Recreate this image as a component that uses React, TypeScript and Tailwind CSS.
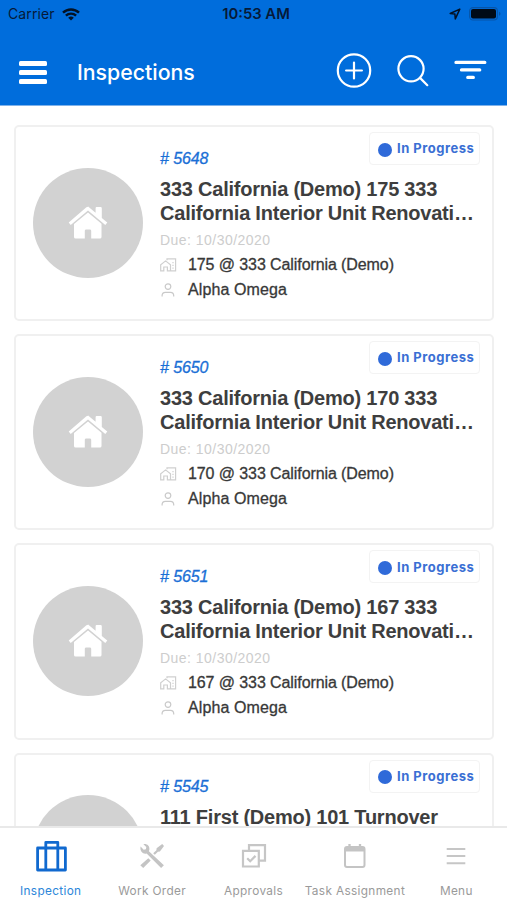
import React from "react";

const helv = "font-['Liberation_Sans',Arial,sans-serif]";
const inter = "font-['Inter',sans-serif]";

type Inspection = { id: string; title: string[]; due: string; unit: string; person: string };

const inspections: Inspection[] = [
  { id: "5648", title: ["333 California (Demo) 175 333", "California Interior Unit Renovati…"], due: "10/30/2020", unit: "175 @ 333 California (Demo)", person: "Alpha Omega" },
  { id: "5650", title: ["333 California (Demo) 170 333", "California Interior Unit Renovati…"], due: "10/30/2020", unit: "170 @ 333 California (Demo)", person: "Alpha Omega" },
  { id: "5651", title: ["333 California (Demo) 167 333", "California Interior Unit Renovati…"], due: "10/30/2020", unit: "167 @ 333 California (Demo)", person: "Alpha Omega" },
  { id: "5545", title: ["111 First (Demo) 101 Turnover"], due: "", unit: "", person: "" },
];

function HouseIcon() {
  return (
    <svg width="40" height="34" viewBox="0 0 40 34" fill="#fff">
      <path d="M20 .6 27.6 6.8V2.2q0-1.2 1-1.2h4q1.2 0 1.2 1.2v9.7l5.5 4.6-2 2.4L20 4.6 2.7 18.9.7 16.5 18.4 1.3Q20 .1 21.6 1.3Z" />
      <path d="M20 6.6 33.5 17.8V31q0 1.6-1.6 1.6H23.2v-7.8q0-1.4-1.4-1.4h-3.6q-1.4 0-1.4 1.4v7.8H7.6Q6 32.6 6 31V18.1Z" />
    </svg>
  );
}

function UnitIcon() {
  return (
    <svg width="18" height="14" viewBox="0 0 18 14" fill="none" stroke="#cfcfcf" strokeWidth="1.2">
      <path d="M.7 12.9V6.8L5.6 2.9l4.9 3.9v6.1H7.4V9H3.8v3.9ZM7 2.3V.9h8.6v12h-5" />
      <path d="M13 4v1.2M13 6.8V8M13 9.6v1.2" />
    </svg>
  );
}

function PersonIcon() {
  return (
    <svg width="14" height="14" viewBox="0 0 14 14" fill="none" stroke="#c9c9c9" strokeWidth="1.2">
      <circle cx="7" cy="3.6" r="2.8" />
      <path d="M1.1 13.6v-1q0-3.2 3.3-3.2h5q3.3 0 3.3 3.2v1" />
    </svg>
  );
}

function Card({ item }: { item: Inspection }) {
  return (
    <article className="relative flex h-[196.2px] shrink-0 rounded-[5px] border-2 border-[#f0f0f0] bg-white pl-[17.5px]">
      <div className="mt-[40.5px] flex size-[110px] shrink-0 items-center justify-center rounded-full bg-[#d2d2d2]">
        <HouseIcon />
      </div>
      <div className={`ml-[17px] whitespace-nowrap pt-[22px] ${helv}`}>
        <div className="h-[28px] text-[16px] leading-[20px] tracking-[-0.1px] italic text-[#1a6fd6] [-webkit-text-stroke:0.3px]">
          # {item.id}
        </div>
        <h2 className="h-[54px] text-[20px] leading-[24px] font-bold tracking-[-0.22px] text-[#3e3e3e]">
          {item.title.map((line) => (
            <span key={line} className="block">{line}</span>
          ))}
        </h2>
        {item.due && (
          <>
            <div className="h-[21px] text-[14px] leading-[18px] tracking-[0.47px] text-[#cdcdcd]">Due: {item.due}</div>
            <div className="flex h-[25px] items-center text-[16px] tracking-[-0.09px] text-[#383838] [-webkit-text-stroke:0.3px]">
              <span className="w-[28px]"><UnitIcon /></span>
              {item.unit}
            </div>
            <div className="flex h-[25px] items-center text-[16px] tracking-[0.1px] text-[#383838] [-webkit-text-stroke:0.3px]">
              <span className="w-[28px] pl-[1px]"><PersonIcon /></span>
              {item.person}
            </div>
          </>
        )}
      </div>
      <div className={`absolute top-[5px] right-[12px] flex h-[33px] w-[111px] items-center rounded-[4px] border-[1.5px] border-[#f3f3f3] pl-[8px] text-[13px] font-bold whitespace-nowrap tracking-[0.5px] text-[#3a6fd4] ${inter}`}>
        <span className="mt-[2px] mr-[5px] size-[14px] shrink-0 rounded-full bg-[#2f6ad9]" />
        <span className="pt-[1px]">In Progress</span>
      </div>
    </article>
  );
}

function Tab({ label, active, children }: { label: string; active?: boolean; children: React.ReactNode }) {
  return (
    <div className="flex min-w-0 flex-1 flex-col items-center">
      <div className="flex h-[56px] items-center justify-center">{children}</div>
      <span className={`text-[11.8px] leading-[14px] tracking-[0.35px] whitespace-nowrap ${active ? "text-[#2b86d9]" : "text-[#9a9a9a]"}`}>{label}</span>
    </div>
  );
}

export default function App() {
  return (
    <div className="flex h-[900px] w-[507px] flex-col overflow-hidden bg-white">
      <header className={`flex h-[106px] shrink-0 flex-col border-b border-[#7fb2ea] bg-[#006ddc] ${inter}`}>
        <div className="grid h-[28px] grid-cols-3 items-center px-[8px] text-[#061a38]">
          <div className="flex items-center gap-[7px] text-[14px] leading-[18px] tracking-[0.1px]">
            Carrier
            <svg width="18" height="13" viewBox="0 0 18 13" fill="none" stroke="#031225" strokeWidth="2.4">
              <path d="M1 4.7a11.5 11.5 0 0 1 16 0M3.9 7.7a7.3 7.3 0 0 1 10.2 0" />
              <path d="M9 12.6 6.2 9.8a4 4 0 0 1 5.6 0Z" fill="#031225" stroke="none" />
            </svg>
          </div>
          <div className="pl-[5px] text-center text-[14.8px] font-semibold whitespace-nowrap">10:53 AM</div>
          <div className="-mr-[2px] flex items-center justify-end gap-[8px]">
            <svg width="12" height="12" viewBox="0 0 12 12" fill="none" stroke="#031225" strokeWidth="1.5" strokeLinejoin="round">
              <path d="M10.8 1.1 1.2 5.5l4.7.6.4 4.8Z" />
            </svg>
            <svg width="32" height="14" viewBox="0 0 32 14">
              <rect x=".6" y=".6" width="27.8" height="12.4" rx="3.4" fill="none" stroke="#0755a8" strokeWidth="1.1" />
              <rect x="2" y="2" width="25" height="9.6" rx="2" fill="#000b18" />
              <path d="M30 4.8q1.5.6 1.5 2t-1.5 2Z" fill="#0755a8" />
            </svg>
          </div>
        </div>
        <div className="flex h-[77px] items-center pl-[19px] text-white">
          <div className="mt-[11px] flex w-[58px] flex-col gap-[4px]">
            <span className="h-[5px] w-[28px] rounded-[1.5px] bg-white" />
            <span className="h-[5px] w-[28px] rounded-[1.5px] bg-white" />
            <span className="h-[5px] w-[28px] rounded-[1.5px] bg-white" />
          </div>
          <h1 className="mt-[13px] w-[258px] text-[21.3px] font-medium">Inspections</h1>
          <svg className="mt-[8px] shrink-0" width="172" height="36" viewBox="0 0 172 36" fill="none" stroke="#fff" strokeWidth="2.2" strokeLinecap="round">
            <circle cx="19" cy="17.5" r="16.2" />
            <path d="M19 9.6v15.8M11.1 17.5h15.8" />
            <circle cx="76" cy="15.8" r="12.6" />
            <path d="m85 24.9 7.3 7.3" />
            <path strokeWidth="3.3" d="M121 9.4h28.8M126.5 16.9h18.2M132.8 24.4h5.5" />
          </svg>
        </div>
      </header>

      <main className="flex min-h-0 flex-1 flex-col gap-[13px] overflow-hidden pt-[19px] pr-[13px] pl-[13.5px]">
        {inspections.map((item) => (
          <Card key={item.id} item={item} />
        ))}
      </main>

      <nav className={`flex h-[74px] shrink-0 border-t-2 border-[#e9e9e9] bg-white ${inter}`}>
        <Tab label="Inspection" active>
          <svg width="32" height="32" viewBox="0 0 32 32" fill="none" stroke="#1069cf" strokeWidth="2.8" strokeLinejoin="round">
            <path d="M2.6 8h27.8v22H2.6ZM10.8 30V2.3h12V30" />
          </svg>
        </Tab>
        <Tab label="Work Order">
          <svg width="26" height="26" viewBox="0 0 26 26" fill="#c4c4c4">
            <path d="M1.6 3.6 4.7 6.7 6.9 6.2 7.3 4.1 4.4 1.2C7.5.3 10.8 2.6 10.4 6.4L9.9 8.2 24.9 22.3 22.1 25.1 7.6 10.6C4.2 11.6.5 8.4 1.6 3.6Z" />
            <path d="M9.3 15.2 11.7 17.6 4.2 25 1.3 22.2ZM14.2 10.2 17.4 7.2 17.6 5.2 23.2 1 25 2.9 20.9 8.5 18.9 8.7 15.8 11.8Z" />
          </svg>
        </Tab>
        <Tab label="Approvals">
          <svg width="26" height="26" viewBox="0 0 26 26" fill="none" stroke="#c6c6c6" strokeWidth="2.2">
            <path d="M2 7.8h15.8v15.7H2ZM8 7.8V2.2h16v15.5h-6.2" />
            <path d="m6.2 15.2 3 3 5.3-5.3" />
          </svg>
        </Tab>
        <Tab label="Task Assignment">
          <svg width="24" height="26" viewBox="0 0 24 26" fill="none" stroke="#c4c4c4" strokeWidth="2">
            <rect x="2" y="4" width="19.5" height="20" rx="2" />
            <path d="M2 6.5h19.5" strokeWidth="4" />
            <path d="M6.5 1v4M17 1v4" strokeWidth="2.3" />
          </svg>
        </Tab>
        <Tab label="Menu">
          <svg width="20" height="20" viewBox="0 0 20 20" stroke="#c6c6c6" strokeWidth="2">
            <path d="M.7 3h18.6M.7 10h18.6M.7 17.2h18.6" />
          </svg>
        </Tab>
      </nav>
    </div>
  );
}
